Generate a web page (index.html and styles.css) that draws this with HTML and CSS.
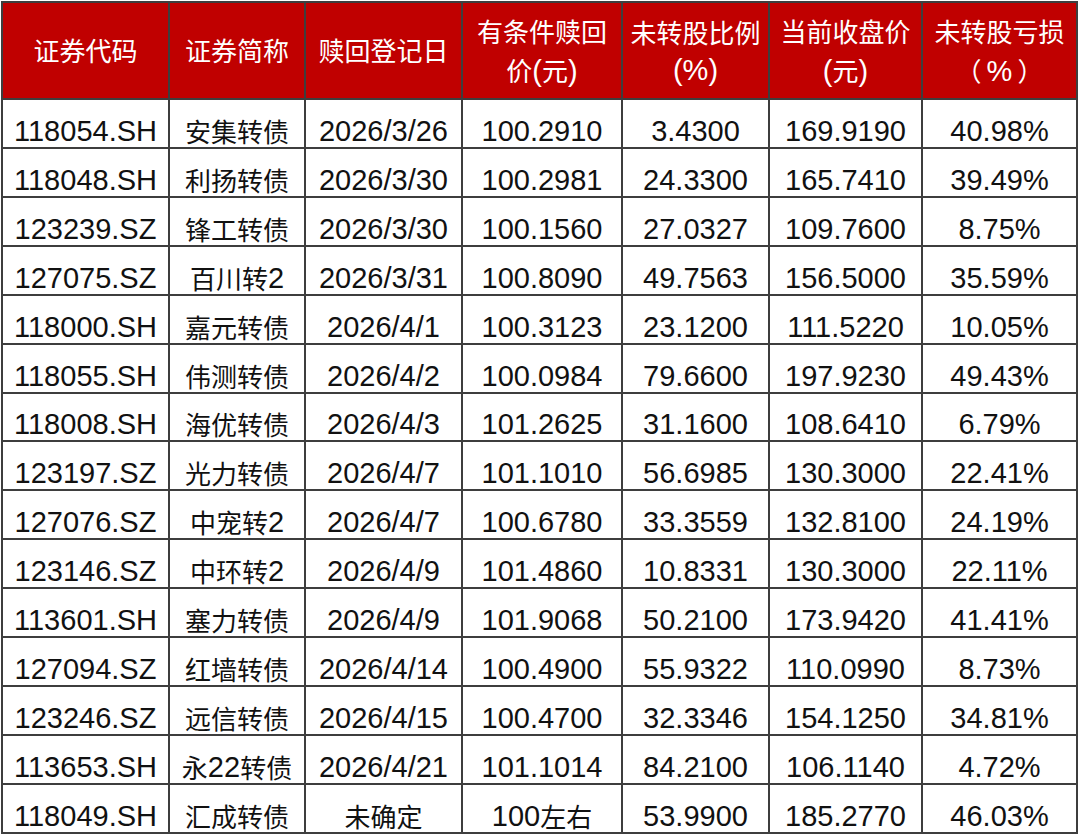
FILE: index.html
```html
<!DOCTYPE html>
<html lang="zh-CN">
<head>
<meta charset="utf-8">
<title>可转债赎回登记</title>
<link rel="stylesheet" href="styles.css">
</head>
<body>
<div class="table">
  <div class="th"><div class="hd"><span class="c">证券代码</span></div></div>
  <div class="th"><div class="hd"><span class="c">证券简称</span></div></div>
  <div class="th"><div class="hd"><span class="c">赎回登记日</span></div></div>
  <div class="th"><div class="hd"><span class="c">有条件赎回</span><br><span class="c">价</span>(<span class="c">元</span>)</div></div>
  <div class="th"><div class="hd"><span class="c">未转股比例</span><br>(%)</div></div>
  <div class="th"><div class="hd"><span class="c">当前收盘价</span><br>(<span class="c">元</span>)</div></div>
  <div class="th"><div class="hd"><span class="c">未转股亏损</span><br><span class="c">（</span><span class="pct">%</span><span class="c">）</span></div></div>

  <div class="td">118054.SH</div><div class="td"><span class="c">安集转债</span></div><div class="td">2026/3/26</div><div class="td">100.2910</div><div class="td">3.4300</div><div class="td">169.9190</div><div class="td">40.98%</div>
  <div class="td">118048.SH</div><div class="td"><span class="c">利扬转债</span></div><div class="td">2026/3/30</div><div class="td">100.2981</div><div class="td">24.3300</div><div class="td">165.7410</div><div class="td">39.49%</div>
  <div class="td">123239.SZ</div><div class="td"><span class="c">锋工转债</span></div><div class="td">2026/3/30</div><div class="td">100.1560</div><div class="td">27.0327</div><div class="td">109.7600</div><div class="td">8.75%</div>
  <div class="td">127075.SZ</div><div class="td"><span class="c">百川转</span>2</div><div class="td">2026/3/31</div><div class="td">100.8090</div><div class="td">49.7563</div><div class="td">156.5000</div><div class="td">35.59%</div>
  <div class="td">118000.SH</div><div class="td"><span class="c">嘉元转债</span></div><div class="td">2026/4/1</div><div class="td">100.3123</div><div class="td">23.1200</div><div class="td">111.5220</div><div class="td">10.05%</div>
  <div class="td">118055.SH</div><div class="td"><span class="c">伟测转债</span></div><div class="td">2026/4/2</div><div class="td">100.0984</div><div class="td">79.6600</div><div class="td">197.9230</div><div class="td">49.43%</div>
  <div class="td">118008.SH</div><div class="td"><span class="c">海优转债</span></div><div class="td">2026/4/3</div><div class="td">101.2625</div><div class="td">31.1600</div><div class="td">108.6410</div><div class="td">6.79%</div>
  <div class="td">123197.SZ</div><div class="td"><span class="c">光力转债</span></div><div class="td">2026/4/7</div><div class="td">101.1010</div><div class="td">56.6985</div><div class="td">130.3000</div><div class="td">22.41%</div>
  <div class="td">127076.SZ</div><div class="td"><span class="c">中宠转</span>2</div><div class="td">2026/4/7</div><div class="td">100.6780</div><div class="td">33.3559</div><div class="td">132.8100</div><div class="td">24.19%</div>
  <div class="td">123146.SZ</div><div class="td"><span class="c">中环转</span>2</div><div class="td">2026/4/9</div><div class="td">101.4860</div><div class="td">10.8331</div><div class="td">130.3000</div><div class="td">22.11%</div>
  <div class="td">113601.SH</div><div class="td"><span class="c">塞力转债</span></div><div class="td">2026/4/9</div><div class="td">101.9068</div><div class="td">50.2100</div><div class="td">173.9420</div><div class="td">41.41%</div>
  <div class="td">127094.SZ</div><div class="td"><span class="c">红墙转债</span></div><div class="td">2026/4/14</div><div class="td">100.4900</div><div class="td">55.9322</div><div class="td">110.0990</div><div class="td">8.73%</div>
  <div class="td">123246.SZ</div><div class="td"><span class="c">远信转债</span></div><div class="td">2026/4/15</div><div class="td">100.4700</div><div class="td">32.3346</div><div class="td">154.1250</div><div class="td">34.81%</div>
  <div class="td">113653.SH</div><div class="td"><span class="c">永</span>22<span class="c">转债</span></div><div class="td">2026/4/21</div><div class="td">101.1014</div><div class="td">84.2100</div><div class="td">106.1140</div><div class="td">4.72%</div>
  <div class="td">118049.SH</div><div class="td"><span class="c">汇成转债</span></div><div class="td"><span class="c">未确定</span></div><div class="td">100<span class="c">左右</span></div><div class="td">53.9900</div><div class="td">185.2770</div><div class="td">46.03%</div>
</div>
</body>
</html>
```

FILE: styles.css
```css
html, body {
  margin: 0;
  padding: 0;
  background: #ffffff;
}

body {
  padding: 1px 0 0 1px;
  font-family: "Liberation Sans", Arial, "Noto Sans CJK SC", sans-serif;
  font-size: 29px;
  color: #111111;
}

.table {
  display: grid;
  grid-template-columns: 167px 136px 157px 160px 147px 153px 155px;
  grid-template-rows: 97px repeat(15, 48.93px);
  width: max-content;
  border-left: 2px solid #3e3e3e;
  border-top: 2px solid #3e3e3e;
}

.th,
.td {
  border-right: 2px solid #3e3e3e;
  border-bottom: 2px solid #3e3e3e;
  display: flex;
  justify-content: center;
  text-align: center;
  white-space: nowrap;
  box-sizing: border-box;
}

.th {
  background: #c00000;
  color: #ffffff;
  align-items: center;
}

.hd {
  line-height: 37px;
}

.pct {
  margin: 0 5px;
}

.td {
  align-items: flex-end;
  line-height: 32px;
}

.c {
  font-family: "Noto Sans CJK SC", "Liberation Sans", sans-serif;
  font-size: 26px;
}
```
